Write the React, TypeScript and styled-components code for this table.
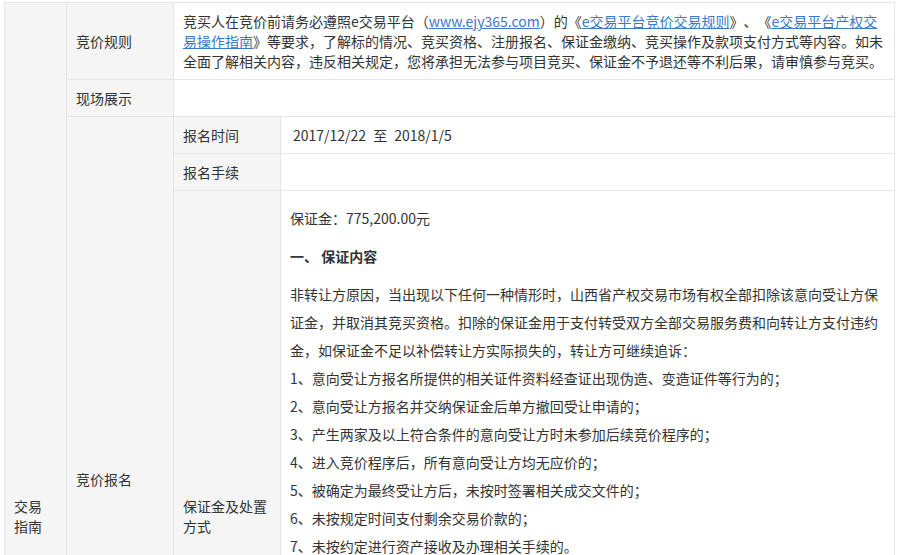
import React from "react";
import styled, { createGlobalStyle } from "styled-components";

const GlobalStyle = createGlobalStyle`
  html, body { margin: 0; padding: 0; background: #ffffff; }
  body {
    font-family: "Noto Sans CJK SC", "Noto Sans", sans-serif;
    color: #333333;
    font-size: 14px;
    text-spacing-trim: space-all;
  }
`;

const Page = styled.div`
  padding: 2px 0 0 4px;
`;

const Table = styled.table`
  border-collapse: collapse;
  table-layout: fixed;
  width: 890px;
  font-size: 14px;
  line-height: 20px;
  color: #333333;
`;

const Row = styled.tr<{ $h?: number }>`
  height: ${(p) => (p.$h ? `${p.$h}px` : "auto")};
`;

const Cell = styled.td<{ $label?: boolean; $pad?: string; $top?: boolean }>`
  border: 1px solid #e5e5e5;
  padding: ${(p) => p.$pad ?? "8px 9px"};
  background: ${(p) => (p.$label ? "#f5f5f5" : "#ffffff")};
  vertical-align: ${(p) => (p.$top ? "top" : "middle")};
  text-align: left;
  word-break: break-all;
  text-spacing-trim: space-all;
`;

const Link = styled.a`
  color: #3a78cf;
  text-decoration: underline;
`;

const Sep = styled.span`
  margin: 0 7px;
`;

const Para = styled.p<{ $bold?: boolean }>`
  margin: 0 0 10px;
  line-height: 28px;
  font-weight: ${(p) => (p.$bold ? 700 : 400)};
  color: #333333;
`;

const App: React.FC = () => {
  return (
    <>
      <GlobalStyle />
      <Page>
        <Table>
          <colgroup>
            <col style={{ width: 62 }} />
            <col style={{ width: 107 }} />
            <col style={{ width: 107 }} />
            <col style={{ width: 614 }} />
          </colgroup>
          <tbody>
            <Row>
              <Cell $label rowSpan={6}>
                交易
                <br />
                指南
              </Cell>
              <Cell $label>竞价规则</Cell>
              <Cell colSpan={2}>
                竞买人在竞价前请务必遵照e交易平台（<Link href="#">www.ejy365.com</Link>）的《
                <Link href="#">e交易平台竞价交易规则</Link>》、《<Link href="#">e交易平台产权交</Link>
                <br />
                <Link href="#">易操作指南</Link>》等要求，了解标的情况、竞买资格、注册报名、保证金缴纳、竞买操作及款项支付方式等内容。如未
                <br />
                全面了解相关内容，违反相关规定，您将承担无法参与项目竞买、保证金不予退还等不利后果，请审慎参与竞买。
              </Cell>
            </Row>
            <Row>
              <Cell $label>现场展示</Cell>
              <Cell colSpan={2}></Cell>
            </Row>
            <Row>
              <Cell $label rowSpan={3}>竞价报名</Cell>
              <Cell $label>报名时间</Cell>
              <Cell $pad="8px 12px">
                2017/12/22<Sep>至</Sep>2018/1/5
              </Cell>
            </Row>
            <Row>
              <Cell $label>报名手续</Cell>
              <Cell></Cell>
            </Row>
            <Row $h={651}>
              <Cell $label>保证金及处置方式</Cell>
              <Cell $top $pad="13px 9px 8px 9px">
                <Para>保证金：775,200.00元</Para>
                <Para $bold>一、 保证内容</Para>
                <Para>
                  非转让方原因，当出现以下任何一种情形时，山西省产权交易市场有权全部扣除该意向受让方保证金，并取消其竞买资格。扣除的保证金用于支付转受双方全部交易服务费和向转让方支付违约金，如保证金不足以补偿转让方实际损失的，转让方可继续追诉：
                  <br />
                  1、意向受让方报名所提供的相关证件资料经查证出现伪造、变造证件等行为的；
                  <br />
                  2、意向受让方报名并交纳保证金后单方撤回受让申请的；
                  <br />
                  3、产生两家及以上符合条件的意向受让方时未参加后续竞价程序的；
                  <br />
                  4、进入竞价程序后，所有意向受让方均无应价的；
                  <br />
                  5、被确定为最终受让方后，未按时签署相关成交文件的；
                  <br />
                  6、未按规定时间支付剩余交易价款的；
                  <br />
                  7、未按约定进行资产接收及办理相关手续的。
                </Para>
              </Cell>
            </Row>
            <Row $h={188}>
              <Cell $label>竞价方式</Cell>
              <Cell colSpan={2}>网络竞价</Cell>
            </Row>
          </tbody>
        </Table>
      </Page>
    </>
  );
};

export default App;
